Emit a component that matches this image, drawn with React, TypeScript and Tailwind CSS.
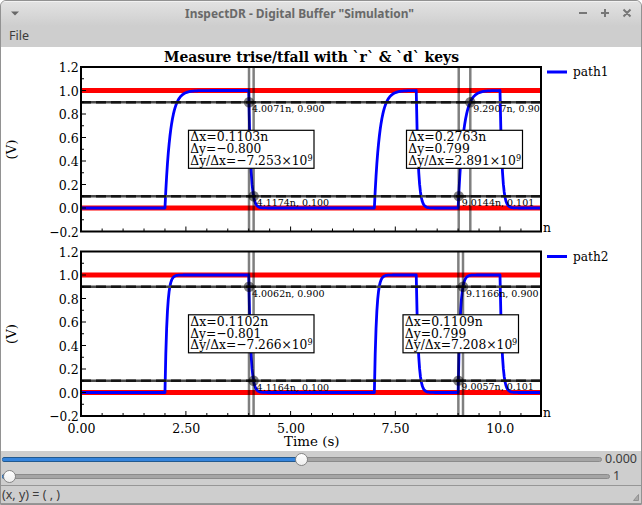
import React from "react";

type Marker = { t: number; v: number; label: string };
type Delta = { a: Marker; b: Marker; boxX: number; boxW: number; lines: string[]; mantissaW: number };
type PlotData = {
  name: string;
  top: number;
  tauRise: number;
  tauFall: number;
  deltas: Delta[];
};

const X0 = 81.2;
const PX_NS = 41.88;
const PX_V = 117.5;
const SERIF = "font-['DejaVu_Serif_Condensed','DejaVu_Serif',serif] [font-stretch:condensed]";
const xOf = (t: number) => X0 + t * PX_NS;

const plots: PlotData[] = [
  {
    name: "path1",
    top: 67,
    tauRise: 0.1257,
    tauFall: 0.0502,
    deltas: [
      {
        a: { t: 4.0071, v: 0.9, label: "4.0071n, 0.900" },
        b: { t: 4.1174, v: 0.1, label: "4.1174n, 0.100" },
        boxX: 188.5, boxW: 125.5, mantissaW: 117,
        lines: ["Δx=0.1103n", "Δy=−0.800", "Δy/Δx=−7.253×10"],
      },
      {
        a: { t: 9.0144, v: 0.101, label: "9.0144n, 0.101" },
        b: { t: 9.2907, v: 0.9, label: "9.2907n, 0.900" },
        boxX: 406.5, boxW: 116, mantissaW: 107.5,
        lines: ["Δx=0.2763n", "Δy=0.799", "Δy/Δx=2.891×10"],
      },
    ],
  },
  {
    name: "path2",
    top: 251.5,
    tauRise: 0.0505,
    tauFall: 0.0502,
    deltas: [
      {
        a: { t: 4.0062, v: 0.9, label: "4.0062n, 0.900" },
        b: { t: 4.1164, v: 0.1, label: "4.1164n, 0.100" },
        boxX: 188.5, boxW: 125.5, mantissaW: 117,
        lines: ["Δx=0.1102n", "Δy=−0.801", "Δy/Δx=−7.266×10"],
      },
      {
        a: { t: 9.0057, v: 0.101, label: "9.0057n, 0.101" },
        b: { t: 9.1166, v: 0.9, label: "9.1166n, 0.900" },
        boxX: 403, boxW: 115.5, mantissaW: 107.5,
        lines: ["Δx=0.1109n", "Δy=0.799", "Δy/Δx=7.208×10"],
      },
    ],
  },
];

// First-order step response between the digital edges.
function waveform(p: PlotData) {
  const edges = [2, 4, 7, 8, 9, 10, 11];
  const yOf = (v: number) => p.top + (1.2 - v) * PX_V;
  let d = `M${X0} ${yOf(0)}`;
  for (let i = 0; i < edges.length - 1; i++) {
    const rising = i % 2 === 0;
    const tau = rising ? p.tauRise : p.tauFall;
    for (let dt = 0; dt <= edges[i + 1] - edges[i] + 0.001; dt += 0.02) {
      const k = Math.exp(-dt / tau);
      d += `L${xOf(edges[i] + dt).toFixed(2)} ${yOf(rising ? 1 - k : k).toFixed(2)}`;
    }
  }
  return d;
}

type LabelProps = React.SVGProps<SVGTextElement> & { bold?: boolean };

function Label({ bold, children, ...rest }: LabelProps) {
  return (
    <text fontSize="13.4" fontWeight={bold ? "bold" : "normal"} lengthAdjust="spacingAndGlyphs" className={SERIF} {...rest}>
      {children}
    </text>
  );
}

function Plot({ p }: { p: PlotData }) {
  const yOf = (v: number) => p.top + (1.2 - v) * PX_V;
  const bottom = yOf(-0.2);
  const clip = `area-${p.name}`;
  const markers = p.deltas.flatMap((d) => [d.a, d.b]);
  return (
    <g>
      <clipPath id={clip}>
        <rect x="81" y={p.top} width="459.5" height={bottom - p.top} />
      </clipPath>
      <g clipPath={`url(#${clip})`}>
        {[0, 1].map((v) => (
          <line key={v} x1="81" x2="541" y1={yOf(v)} y2={yOf(v)} stroke="#f00" strokeWidth="5" />
        ))}
        <path d={waveform(p)} fill="none" stroke="#00f" strokeWidth="2.8" strokeLinejoin="round" />
        {[0.9, 0.1].map((v) => (
          <g key={v}>
            <line x1="81" x2="541" y1={yOf(v)} y2={yOf(v)} stroke="#4a4a4a" strokeWidth="2.5" />
            <line x1="81" x2="541" y1={yOf(v)} y2={yOf(v)} stroke="#151515" strokeWidth="2.5" strokeDasharray="10 5" />
          </g>
        ))}
        {markers.map((m) => (
          <g key={m.label}>
            <line x1={xOf(m.t)} x2={xOf(m.t)} y1={p.top} y2={bottom} stroke="#000" strokeOpacity=".5" strokeWidth="2.5" />
            <circle cx={xOf(m.t)} cy={yOf(m.v)} r="5.2" fill="#000" fillOpacity=".5" />
          </g>
        ))}
        {markers.map((m) => (
          <text key={m.label} x={xOf(m.t) + 3} y={yOf(m.v) + 9.8} fontSize="9.6" textLength="72.5" lengthAdjust="spacingAndGlyphs" className="font-['DejaVu_Serif',serif]">
            {m.label}
          </text>
        ))}
      </g>
      {p.deltas.map((d) => (
        <g key={d.boxX}>
          <rect x={d.boxX} y={p.top + 63.3} width={d.boxW} height="38" fill="#fff" stroke="#000" strokeWidth="1.2" />
          <Label x={d.boxX + 1.8} y={p.top + 74.3} textLength="78">{d.lines[0]}</Label>
          <Label x={d.boxX + 1.8} y={p.top + 86} textLength={d.lines[1].length === 9 ? 71 : 61.5}>{d.lines[1]}</Label>
          <Label x={d.boxX + 1.8} y={p.top + 97.5} textLength={d.mantissaW}>{d.lines[2]}</Label>
          <Label x={d.boxX + d.boxW - 6.5} y={p.top + 93.5} fontSize="9">9</Label>
        </g>
      ))}
      {Array.from({ length: 15 }, (_, i) => (
        <line key={i} x1="82" x2={i % 2 === 0 ? 86 : 84} y1={yOf(1.2 - i / 10)} y2={yOf(1.2 - i / 10)} stroke="#000" strokeWidth="1" />
      ))}
      {Array.from({ length: 22 }, (_, i) => (
        <line key={i} x1={xOf(i / 2)} x2={xOf(i / 2)} y1={bottom} y2={bottom - (i % 5 === 0 ? 5 : 3)} stroke="#000" strokeWidth="1" />
      ))}
      <rect x="81" y={p.top} width="460" height={bottom - p.top} fill="none" stroke="#000" strokeWidth="2" />
      {["1.2", "1.0", "0.8", "0.6", "0.4", "0.2", "0.0", "−0.2"].map((s, i) => (
        <Label key={s} x="78.8" y={p.top + i * 23.5 + 5} textAnchor="end" textLength={s.length === 4 ? 29.5 : 20}>
          {s}
        </Label>
      ))}
      <Label transform={`translate(15.5 ${p.top + 82.5}) rotate(-90)`} textAnchor="middle" textLength="20">(V)</Label>
      <Label x="543" y={bottom + 0.5} textLength="8">n</Label>
      <line x1="547" x2="567" y1={p.top + 5} y2={p.top + 5} stroke="#00f" strokeWidth="3" />
      <Label x="573" y={p.top + 9} textLength="35.5">{p.name}</Label>
    </g>
  );
}

function Chart() {
  return (
    <svg width="640" height="404" viewBox="1 47 640 404" className="block shrink-0 bg-white">
      <Label bold x="164" y="62" fontSize="14.6" textLength="295">Measure trise/tfall with `r` &amp; `d` keys</Label>
      {plots.map((p) => <Plot key={p.name} p={p} />)}
      {[["0.00", 0], ["2.50", 2.5], ["5.00", 5], ["7.50", 7.5], ["10.0", 10]].map(([s, t]) => (
        <Label key={s} x={xOf(Number(t)) + 0.3} y="433" textAnchor="middle" textLength="28">{s}</Label>
      ))}
      <Label x="284" y="446" textLength="55.5">Time (s)</Label>
    </svg>
  );
}

function Slider({ track, fill, knob, value }: { track: string; fill: string; knob: string; value: string }) {
  return (
    <div className="flex h-[17px] items-center gap-[3px] pl-px">
      <div className={`relative h-[5px] rounded-full border border-[#8b8b8b] bg-[#a5a5a5] ${track}`}>
        <div className={`-mt-px -ml-px h-[5px] rounded-l-full border-y border-[#22598f] bg-[#3584dc] ${fill}`} />
        <div className={`absolute -top-[5px] size-[13px] rounded-full border border-[#858585] bg-linear-to-b from-white to-[#eeeeee] ${knob}`} />
      </div>
      <span className="text-[12.5px] leading-none">{value}</span>
    </div>
  );
}

export default function App() {
  return (
    <div className="flex h-[505px] w-[642px] flex-col overflow-hidden rounded-t-[6px] border border-[#929292] bg-[#cecece] font-['Noto_Sans',sans-serif] text-[#3c3c3c]">
      <header className="flex h-[25px] shrink-0 items-center border-t border-[#f2f2f2] bg-linear-to-b from-[#e2e2e2] to-[#cecece] text-[#696969]">
        <svg width="28" height="24" viewBox="0 0 28 24">
          <path d="M10 9.5h8l-4 4z" fill="#686868" />
        </svg>
        <svg width="544" height="24" viewBox="29 2 544 24" fill="currentColor">
          <text x="185" y="18" fontSize="12.4" fontWeight="bold" textLength="229" lengthAdjust="spacingAndGlyphs">InspectDR - Digital Buffer "Simulation"</text>
        </svg>
        <svg width="68" height="24" viewBox="573 2 68 24" fill="none" stroke="#777" strokeWidth="2">
          <path d="M579 13h8M601 13h8M605 9v8M623.5 9.5l7 7M630.5 9.5l-7 7" />
        </svg>
      </header>
      <nav className="flex h-[21px] shrink-0 items-center pb-px pl-2 text-[12.5px] leading-none">File</nav>
      <Chart />
      <div className="h-[34px] shrink-0">
        <Slider track="w-[600px]" fill="w-[300px]" knob="left-[292px]" value="0.000" />
        <Slider track="w-[608px]" fill="w-[8px]" knob="left-0" value="1" />
      </div>
      <footer className="flex h-[19px] shrink-0 items-center justify-between border-y border-[#969696] pt-px pl-px text-[12.5px] leading-none">
        <span>(x, y) = ( , )</span>
        <svg width="10" height="16" viewBox="0 0 10 16">
          <path d="M2.5 13.5h5v-6z" fill="#aaa" stroke="#888" strokeWidth=".8" />
        </svg>
      </footer>
    </div>
  );
}
